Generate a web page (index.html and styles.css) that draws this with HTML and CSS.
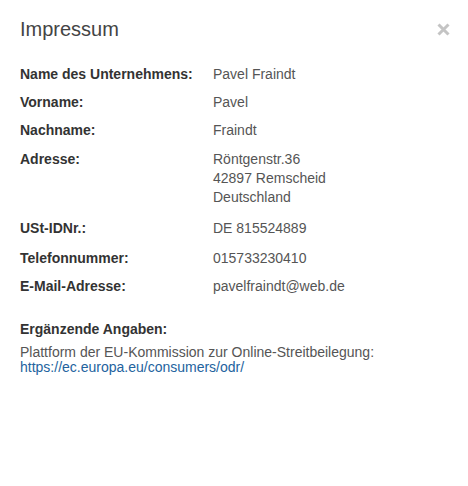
FILE: index.html
```html
<!DOCTYPE html>
<html lang="de">
<head>
  <meta charset="UTF-8">
  <meta name="viewport" content="width=device-width, initial-scale=1.0">
  <title>Impressum</title>
  <link rel="stylesheet" href="styles.css">
</head>
<body>
  <div class="modal">
    <div class="modal-header">
      <h4 class="modal-title">Impressum</h4>
      <button class="close" type="button" aria-label="Schließen">
        <svg width="13" height="13" viewBox="0 0 13 13">
          <path d="M1.5 1.5 L11.5 11.5 M11.5 1.5 L1.5 11.5" stroke="currentColor" stroke-width="3" fill="none"/>
        </svg>
      </button>
    </div>

    <div class="modal-body">
      <div class="info-row">
        <div class="label">Name des Unternehmens:</div>
        <div class="value">Pavel Fraindt</div>
      </div>
      <div class="info-row">
        <div class="label">Vorname:</div>
        <div class="value">Pavel</div>
      </div>
      <div class="info-row">
        <div class="label">Nachname:</div>
        <div class="value">Fraindt</div>
      </div>
      <div class="info-row address">
        <div class="label">Adresse:</div>
        <div class="value">Röntgenstr.36<br>42897 Remscheid<br>Deutschland</div>
      </div>
      <div class="info-row tax">
        <div class="label">USt-IDNr.:</div>
        <div class="value">DE 815524889</div>
      </div>
      <div class="info-row">
        <div class="label">Telefonnummer:</div>
        <div class="value">015733230410</div>
      </div>
      <div class="info-row">
        <div class="label">E-Mail-Adresse:</div>
        <div class="value">pavelfraindt@web.de</div>
      </div>

      <div class="extra">
        <div class="label">Ergänzende Angaben:</div>
        <p>Plattform der EU-Kommission zur Online-Streitbeilegung:<br>
          <a href="https://ec.europa.eu/consumers/odr/">https://ec.europa.eu/consumers/odr/</a></p>
      </div>
    </div>
  </div>
</body>
</html>
```

FILE: styles.css
```css
body {
  font-family: "Liberation Sans", Arial, sans-serif;
  font-size: 14px;
  margin: 0;
  background-color: white;
  color: #333;
}

.modal {
  width: 468px;
  height: 486px;
  background-color: white;
}

.modal-header {
  display: flex;
  justify-content: space-between;
  align-items: center;
  padding: 18px 18px 0 20px;
}

.modal-title {
  margin: 0;
  font-size: 20px;
  font-weight: normal;
  line-height: 22px;
  color: #444;
}

.close {
  border: 0;
  padding: 0;
  background: none;
  color: #c4c4c4;
  display: flex;
  margin-top: 1px;
}

.modal-body {
  padding: 25px 20px 0 20px;
}

.info-row {
  display: grid;
  grid-template-columns: 193px 1fr;
  line-height: 19px;
  margin-bottom: 9px;
}

.info-row.address {
  margin-top: 10px;
  margin-bottom: 12px;
}

.info-row.tax {
  margin-bottom: 11px;
}

.label {
  font-weight: bold;
  color: #333;
}

.value {
  color: #555;
}

.extra {
  margin-top: 24px;
  line-height: 19px;
}

.extra p {
  margin: 6px 0 0 0;
  line-height: 15px;
  color: #555;
}

.extra a {
  color: #23639e;
  text-decoration: none;
}
```
